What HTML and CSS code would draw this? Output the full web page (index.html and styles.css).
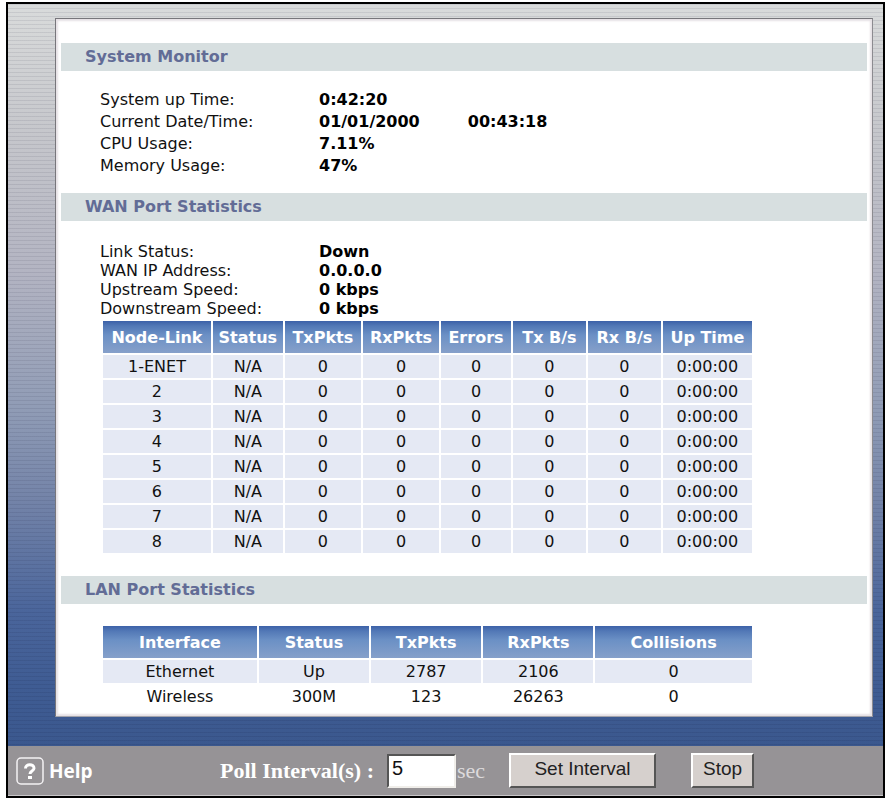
FILE: index.html
```html
<!DOCTYPE html>
<html lang="en">
<head>
<meta charset="utf-8">
<title>System Monitor</title>
<link rel="stylesheet" href="styles.css">
</head>
<body>
<div class="frame">
  <main class="backdrop">
    <div class="panel">
      <section>
        <h2>System Monitor</h2>
        <dl class="facts facts-roomy">
          <dt>System up Time:</dt><dd>0:42:20</dd>
          <dt>Current Date/Time:</dt><dd class="stamp"><span>01/01/2000</span><span>00:43:18</span></dd>
          <dt>CPU Usage:</dt><dd>7.11%</dd>
          <dt>Memory Usage:</dt><dd>47%</dd>
        </dl>
      </section>
      <section>
        <h2>WAN Port Statistics</h2>
        <dl class="facts">
          <dt>Link Status:</dt><dd>Down</dd>
          <dt>WAN IP Address:</dt><dd>0.0.0.0</dd>
          <dt>Upstream Speed:</dt><dd>0 kbps</dd>
          <dt>Downstream Speed:</dt><dd>0 kbps</dd>
        </dl>
        <table class="wan">
          <colgroup><col class="node"><col class="small"><col class="packets"><col class="packets"><col class="small"><col class="rate"><col class="rate"><col></colgroup>
          <thead><tr><th>Node-Link</th><th>Status</th><th>TxPkts</th><th>RxPkts</th><th>Errors</th><th>Tx B/s</th><th>Rx B/s</th><th>Up Time</th></tr></thead>
          <tbody>
            <tr><td>1-ENET</td><td>N/A</td><td>0</td><td>0</td><td>0</td><td>0</td><td>0</td><td>0:00:00</td></tr>
            <tr><td>2</td><td>N/A</td><td>0</td><td>0</td><td>0</td><td>0</td><td>0</td><td>0:00:00</td></tr>
            <tr><td>3</td><td>N/A</td><td>0</td><td>0</td><td>0</td><td>0</td><td>0</td><td>0:00:00</td></tr>
            <tr><td>4</td><td>N/A</td><td>0</td><td>0</td><td>0</td><td>0</td><td>0</td><td>0:00:00</td></tr>
            <tr><td>5</td><td>N/A</td><td>0</td><td>0</td><td>0</td><td>0</td><td>0</td><td>0:00:00</td></tr>
            <tr><td>6</td><td>N/A</td><td>0</td><td>0</td><td>0</td><td>0</td><td>0</td><td>0:00:00</td></tr>
            <tr><td>7</td><td>N/A</td><td>0</td><td>0</td><td>0</td><td>0</td><td>0</td><td>0:00:00</td></tr>
            <tr><td>8</td><td>N/A</td><td>0</td><td>0</td><td>0</td><td>0</td><td>0</td><td>0:00:00</td></tr>
          </tbody>
        </table>
      </section>
      <section>
        <h2>LAN Port Statistics</h2>
        <table class="lan">
          <colgroup><col class="interface"><col class="count"><col class="count"><col class="count"><col></colgroup>
          <thead><tr><th>Interface</th><th>Status</th><th>TxPkts</th><th>RxPkts</th><th>Collisions</th></tr></thead>
          <tbody>
            <tr><td>Ethernet</td><td>Up</td><td>2787</td><td>2106</td><td>0</td></tr>
            <tr class="plain"><td>Wireless</td><td>300M</td><td>123</td><td>26263</td><td>0</td></tr>
          </tbody>
        </table>
      </section>
    </div>
  </main>
  <form class="toolbar">
    <a class="help" href="#help">
      <svg width="28" height="28" viewBox="0 0 28 28" aria-hidden="true">
        <rect x="1" y="1" width="26" height="26" rx="4" fill="none" stroke="#f4f2f4" stroke-width="1.500"/>
        <path d="M9.500 11.500C9.500 6.500 18 6.500 18 11.200C18 14.200 14 14 14 17" fill="none" stroke="#fff" stroke-width="3"/>
        <rect x="12" y="19" width="4" height="3" fill="#fff"/>
      </svg>
      <span>Help</span>
    </a>
    <label class="poll-label" for="poll">Poll Interval(s) :</label>
    <input id="poll" type="text" value="5">
    <span class="unit">sec</span>
    <button class="set" type="button">Set Interval</button>
    <button class="stop" type="button">Stop</button>
  </form>
</div>
</body>
</html>
```

FILE: styles.css
```css
* {
  box-sizing: border-box;
}

body {
  margin: 0;
  padding: 2px 2px 2px 6px;
  background: #fff;
  color: #111;
  font: 16px/19px "DejaVu Sans", Verdana, sans-serif;
}

.frame {
  border: 2px solid #000;
}

.backdrop {
  padding: 14px 10px 29px 47px;
  background:
    repeating-linear-gradient(rgba(0, 0, 30, 0.08) 0 1px, transparent 1px 4px),
    linear-gradient(#d9dbdb 0, #c5c6cb 18%, #b3b4c2 36%, #8f9bb5 55%, #7383a8 67%, #4a659b 82%, #3f5c93 92%, #3b588e 100%);
}

.panel {
  padding: 24px 5px 6px;
  border: 1px solid #77767b;
  border-right-color: #8c8b90;
  border-bottom-color: #a3a4ac;
  background: #fff;
  box-shadow: inset 0 0 2px 2px #e6e1e5;
}

h2 {
  margin: 0;
  padding: 0 24px;
  background: #d7dfe0;
  color: #626c96;
  font-size: 16px;
  line-height: 28px;
}

.facts {
  display: grid;
  grid-template-columns: 219px 1fr;
  margin: 0;
  padding: 21px 0 1px 39px;
  color: #111;
}

.facts-roomy {
  padding: 18px 0 16px 39px;
  line-height: 22px;
}

dd {
  margin: 0;
  color: #000;
  font-weight: bold;
}

.stamp {
  display: flex;
  gap: 48px;
}

table {
  width: 81%;
  table-layout: fixed;
  border-spacing: 2px;
  text-align: center;
}

.wan {
  margin: 0 0 21px 40px;
}

.lan {
  margin: 20px 0 0 40px;
}

th, td {
  padding: 0;
  white-space: nowrap;
}

th {
  height: 32px;
  background: linear-gradient(#3c61a8 0, #5278b6 5px, #6b90c5 14px, #86a0ca 100%);
  color: #fff;
}

td {
  height: 23px;
  background: #e5e9f4;
}

.plain td {
  background: none;
}

.node { width: 17%; }
.small { width: 11%; }
.packets { width: 12%; }
.rate { width: 11.5%; }
.interface { width: 24%; }
.count { width: 17.2%; }

.toolbar {
  display: flex;
  align-items: center;
  height: 50px;
  padding: 0 8px;
  border-bottom: 1px solid #c8c6c8;
  background: #969396;
  color: #fff;
}

.help {
  display: flex;
  align-items: center;
  gap: 5px;
  width: 204px;
  color: #fff;
  font: bold 19px "Open Sans", sans-serif;
  text-decoration: none;
}

.poll-label {
  width: 161px;
  white-space: nowrap;
  font: bold 22px "Liberation Serif", serif;
}

input {
  width: 69px;
  height: 34px;
  margin-left: 6px;
  padding: 0 3px 4px;
  border: 2px solid;
  border-color: #555 #f0eeea #f0eeea #555;
  background: #fff;
  color: #111;
  font: 20px "Liberation Sans", sans-serif;
}

.unit {
  width: 29px;
  padding-left: 1px;
  color: #dcdadc;
  font: 22px "Liberation Serif", serif;
}

button {
  height: 35px;
  padding: 0 0 4px;
  border: 2px solid;
  border-color: #fff #555 #555 #fff;
  background: #d6d0cd;
  color: #222;
  font: 19px "Liberation Sans", sans-serif;
}

.set {
  width: 147px;
  margin-left: 24px;
}

.stop {
  width: 63px;
  margin-left: 35px;
}
```
